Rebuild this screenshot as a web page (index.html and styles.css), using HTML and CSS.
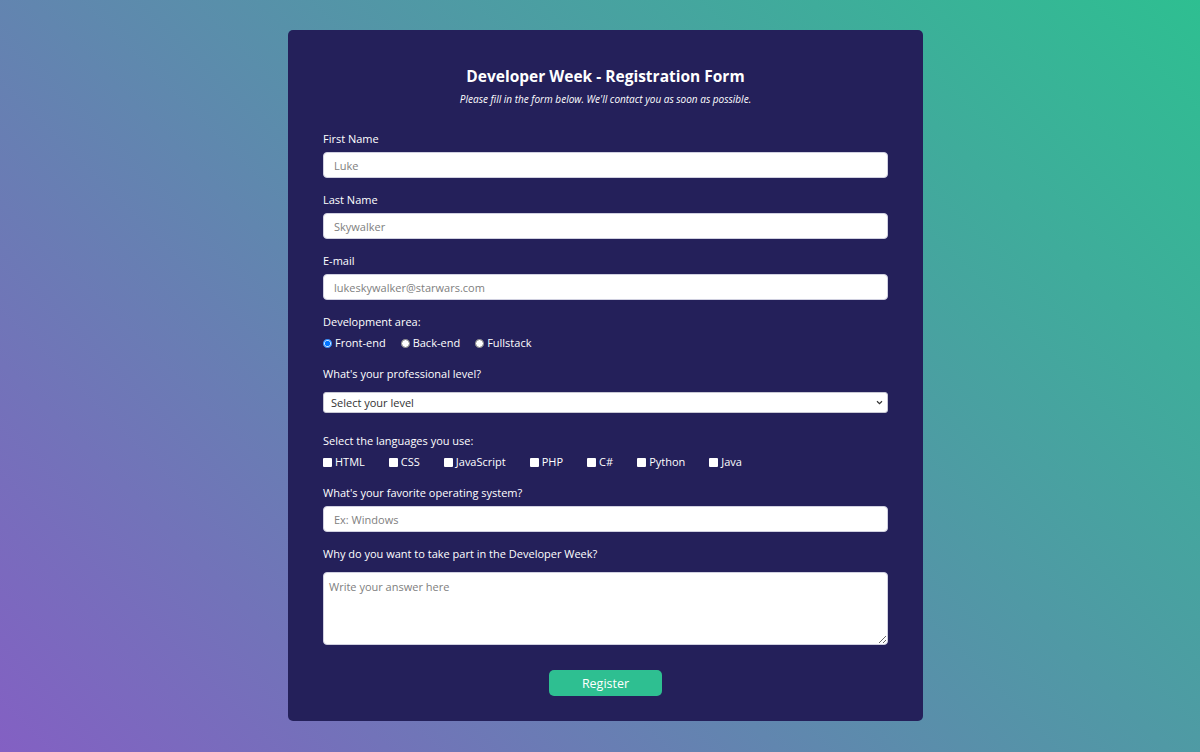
FILE: index.html
```html
<!DOCTYPE html>
<html lang="en">
<head>
<meta charset="utf-8">
<title>Developer Week - Registration Form</title>
<link rel="stylesheet" href="styles.css">
</head>
<body>
<div class="page">
  <form class="card">
    <h1 class="title">Developer Week - Registration Form</h1>
    <p class="subtitle">Please fill in the form below. We'll contact you as soon as possible.</p>

    <div class="field">
      <label class="label" for="first">First Name</label>
      <input class="input" id="first" type="text" placeholder="Luke">
    </div>
    <div class="field">
      <label class="label" for="last">Last Name</label>
      <input class="input" id="last" type="text" placeholder="Skywalker">
    </div>
    <div class="field">
      <label class="label" for="email">E-mail</label>
      <input class="input" id="email" type="email" placeholder="lukeskywalker@starwars.com">
    </div>
    <div class="field">
      <span class="label">Development area:</span>
      <div class="options radios">
        <label class="opt"><input type="radio" name="area" checked> Front-end</label>
        <label class="opt"><input type="radio" name="area"> Back-end</label>
        <label class="opt"><input type="radio" name="area"> Fullstack</label>
      </div>
    </div>
    <div class="field field-select">
      <label class="label" for="level">What's your professional level?</label>
      <select class="select" id="level">
        <option>Select your level</option>
        <option>Junior</option>
        <option>Pleno</option>
        <option>Senior</option>
      </select>
    </div>
    <div class="field">
      <span class="label">Select the languages you use:</span>
      <div class="options checks">
        <label class="opt"><input class="box" type="checkbox"> HTML</label>
        <label class="opt"><input class="box" type="checkbox"> CSS</label>
        <label class="opt"><input class="box" type="checkbox"> JavaScript</label>
        <label class="opt"><input class="box" type="checkbox"> PHP</label>
        <label class="opt"><input class="box" type="checkbox"> C#</label>
        <label class="opt"><input class="box" type="checkbox"> Python</label>
        <label class="opt"><input class="box" type="checkbox"> Java</label>
      </div>
    </div>
    <div class="field">
      <label class="label" for="os">What's your favorite operating system?</label>
      <input class="input" id="os" type="text" placeholder="Ex: Windows">
    </div>
    <div class="field field-area">
      <label class="label" for="why">Why do you want to take part in the Developer Week?</label>
      <textarea class="textarea" id="why" placeholder="Write your answer here"></textarea>
    </div>
    <div class="actions">
      <button class="button" type="button">Register</button>
    </div>
  </form>
</div>
</body>
</html>
```

FILE: styles.css
```css
* { box-sizing: border-box; }

html, body {
  margin: 0;
  height: 100%;
}

body {
  font-family: "Open Sans", "DejaVu Sans", sans-serif;
  background: linear-gradient(45deg, #8360c3, #2ebf91);
  color: #ffffff;
  overflow: hidden;
}

.page {
  display: flex;
  justify-content: center;
  padding: 30px 0 0 11px;
}

.card {
  width: 635px;
  background: #24205a;
  border-radius: 5px;
  padding: 34px 35px 25px;
  display: flex;
  flex-direction: column;
}

.title {
  margin: 0;
  text-align: center;
  font-size: 15.5px;
  line-height: 24px;
  font-weight: 700;
}

.subtitle {
  margin: 4px 0 25px;
  text-align: center;
  font-size: 10px;
  line-height: 14px;
  font-style: italic;
}

.field {
  display: flex;
  flex-direction: column;
  margin-bottom: 14px;
}

.label {
  font-size: 11px;
  line-height: 16px;
  margin-bottom: 5px;
  font-weight: 500;
}

.input {
  height: 26px;
  width: 100%;
  border: 1px solid #d0d0e0;
  border-radius: 4px;
  background: #ffffff;
  padding: 0 10px;
  font-family: inherit;
  font-size: 11px;
  color: #333;
}

.input::placeholder,
.textarea::placeholder {
  color: #808080;
}

.options {
  display: flex;
  align-items: center;
  font-size: 11px;
  line-height: 16px;
  margin-bottom: 1px;
}

.opt {
  display: flex;
  align-items: center;
  gap: 3px;
}

.opt input {
  margin: 0;
  width: 9px;
  height: 9px;
}

.radios { gap: 15px; }
.checks { gap: 24px; }

.box {
  appearance: none;
  -webkit-appearance: none;
  background: #ffffff;
  border: none;
  border-radius: 1px;
}

.box:checked {
  background: #2f7fe0;
}

.field-select .label { margin-bottom: 10px; }

.select {
  appearance: none;
  -webkit-appearance: none;
  height: 21px;
  width: 100%;
  border: 1px solid #c8c8d4;
  border-radius: 3px;
  background-color: #ffffff;
  background-image: url("data:image/svg+xml;utf8,<svg xmlns='http://www.w3.org/2000/svg' width='8' height='6' viewBox='0 0 8 6'><path d='M1 1.5 L4 4.5 L7 1.5' fill='none' stroke='%23333' stroke-width='1.4'/></svg>");
  background-repeat: no-repeat;
  background-position: right 4px center;
  background-size: 7px 5px;
  font-family: inherit;
  font-size: 11px;
  color: #333;
  padding: 0 7px;
  margin-bottom: 6px;
}

.field-area .label { margin-bottom: 10px; }

.textarea {
  height: 73px;
  width: 100%;
  border: 1px solid #d0d0e0;
  border-radius: 4px;
  background: #ffffff;
  padding: 6px 5px;
  font-family: inherit;
  font-size: 11px;
  color: #333;
  resize: vertical;
}

.field-area { margin-bottom: 25px; }

.actions {
  display: flex;
  justify-content: center;
}

.button {
  width: 113px;
  height: 26px;
  border: none;
  border-radius: 5px;
  background: #2ebf91;
  color: #ffffff;
  font-family: inherit;
  font-size: 12.5px;
  font-weight: 500;
  padding: 0;
}
```
